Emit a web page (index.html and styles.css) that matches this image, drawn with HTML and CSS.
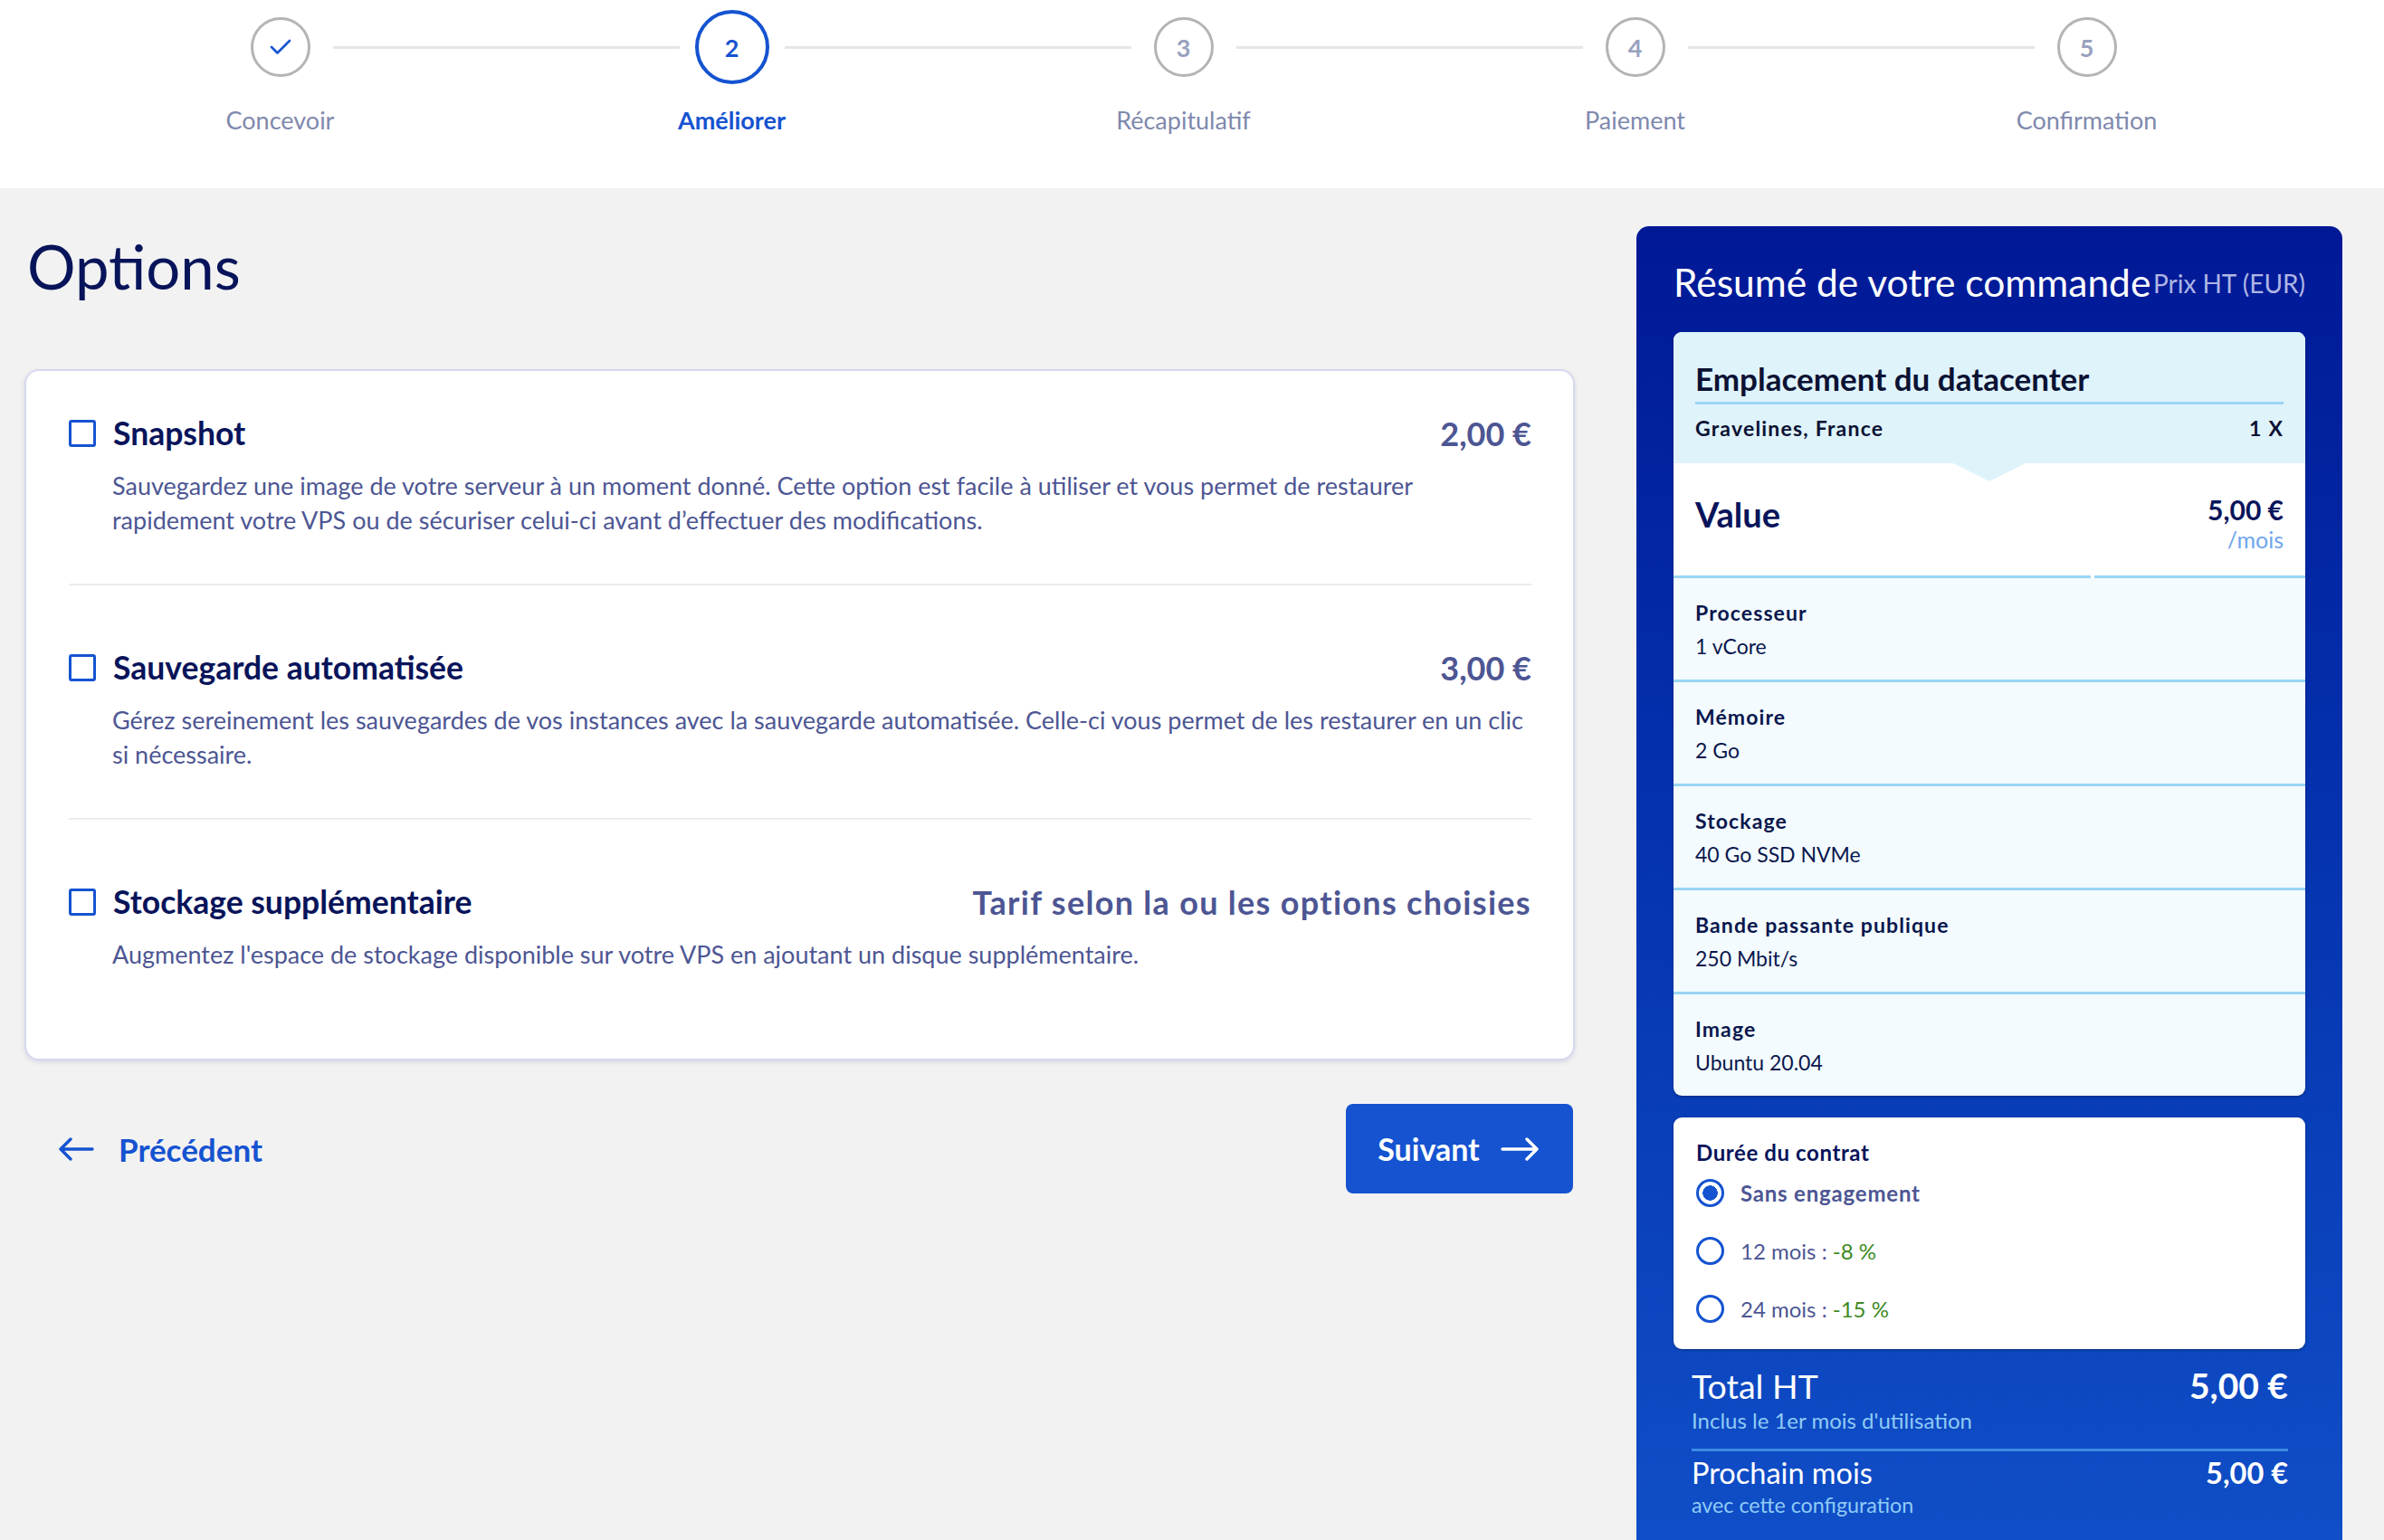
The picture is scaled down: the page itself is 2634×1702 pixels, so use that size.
FILE: index.html
```html
<!DOCTYPE html>
<html lang="fr">
<head>
<meta charset="utf-8">
<title>Options</title>
<link rel="stylesheet" href="styles.css">
</head>
<body>
<header class="stepper">
  <div class="step done">
    <div class="step-dot"><span class="circle"><svg width="24" height="18" viewBox="0 0 24 18"><polyline points="2,9 8.5,15.5 22,2" fill="none" stroke="#1553d0" stroke-width="2.6" stroke-linecap="round" stroke-linejoin="round"/></svg></span></div>
    <div class="step-label">Concevoir</div>
  </div>
  <div class="step active">
    <div class="step-dot"><span class="circle">2</span></div>
    <div class="step-label">Améliorer</div>
  </div>
  <div class="step">
    <div class="step-dot"><span class="circle">3</span></div>
    <div class="step-label">Récapitulatif</div>
  </div>
  <div class="step">
    <div class="step-dot"><span class="circle">4</span></div>
    <div class="step-label">Paiement</div>
  </div>
  <div class="step last">
    <div class="step-dot"><span class="circle">5</span></div>
    <div class="step-label">Confirmation</div>
  </div>
</header>

<main class="layout">
  <section class="content">
    <h1 class="page-title">Options</h1>
    <div class="options-card">
      <div class="option">
        <div class="option-head">
          <span class="checkbox"></span>
          <span class="option-title">Snapshot</span>
          <span class="option-price">2,00 €</span>
        </div>
        <p class="option-desc">Sauvegardez une image de votre serveur à un moment donné. Cette option est facile à utiliser et vous permet de restaurer rapidement votre VPS ou de sécuriser celui-ci avant d’effectuer des modifications.</p>
      </div>
      <div class="option">
        <div class="option-head">
          <span class="checkbox"></span>
          <span class="option-title">Sauvegarde automatisée</span>
          <span class="option-price">3,00 €</span>
        </div>
        <p class="option-desc">Gérez sereinement les sauvegardes de vos instances avec la sauvegarde automatisée. Celle-ci vous permet de les restaurer en un clic si nécessaire.</p>
      </div>
      <div class="option">
        <div class="option-head">
          <span class="checkbox"></span>
          <span class="option-title">Stockage supplémentaire</span>
          <span class="option-price option-price-note">Tarif selon la ou les options choisies</span>
        </div>
        <p class="option-desc">Augmentez l'espace de stockage disponible sur votre VPS en ajoutant un disque supplémentaire.</p>
      </div>
    </div>
    <nav class="nav-row">
      <a class="prev-link" href="#">
        <svg width="42" height="30" viewBox="0 0 42 30"><path d="M39 15H4M15 4L4 15l11 11" fill="none" stroke="#1553d0" stroke-width="3.4" stroke-linecap="round" stroke-linejoin="round"/></svg>
        <span>Précédent</span>
      </a>
      <button class="next-btn" type="button">
        <span>Suivant</span>
        <svg width="46" height="30" viewBox="0 0 46 30"><path d="M3 15h38M30 4l11 11-11 11" fill="none" stroke="#fff" stroke-width="3.4" stroke-linecap="round" stroke-linejoin="round"/></svg>
      </button>
    </nav>
  </section>

  <aside class="summary">
    <div class="summary-head">
      <h2 class="summary-title">Résumé de votre commande</h2>
      <span class="summary-note">Prix HT (EUR)</span>
    </div>

    <div class="spec-card">
      <div class="location">
        <div class="location-title">Emplacement du datacenter</div>
        <div class="location-row"><span>Gravelines, France</span><span>1 X</span></div>
      </div>
      <div class="plan">
        <div class="plan-name">Value</div>
        <div class="plan-price"><div class="amount">5,00 €</div><div class="per">/mois</div></div>
      </div>
      <div class="split-line"><span class="seg-a"></span><span class="seg-b"></span></div>
      <div class="spec"><div class="spec-name">Processeur</div><div class="spec-value">1 vCore</div></div>
      <div class="spec"><div class="spec-name">Mémoire</div><div class="spec-value">2 Go</div></div>
      <div class="spec"><div class="spec-name">Stockage</div><div class="spec-value">40 Go SSD NVMe</div></div>
      <div class="spec"><div class="spec-name">Bande passante publique</div><div class="spec-value">250 Mbit/s</div></div>
      <div class="spec"><div class="spec-name">Image</div><div class="spec-value">Ubuntu 20.04</div></div>
    </div>

    <div class="contract-card">
      <div class="contract-title">Durée du contrat</div>
      <label class="radio-row selected"><span class="radio"></span><span class="radio-label">Sans engagement</span></label>
      <label class="radio-row"><span class="radio"></span><span class="radio-label">12 mois : <span class="discount">-8 %</span></span></label>
      <label class="radio-row"><span class="radio"></span><span class="radio-label">24 mois : <span class="discount">-15 %</span></span></label>
    </div>

    <div class="totals">
      <div class="total-row">
        <div class="total-name">Total HT</div>
        <div class="total-amount">5,00 €</div>
      </div>
      <div class="total-sub">Inclus le 1er mois d'utilisation</div>
      <div class="next-row">
        <div class="next-name">Prochain mois</div>
        <div class="next-amount">5,00 €</div>
      </div>
      <div class="total-sub">avec cette configuration</div>
    </div>
  </aside>
</main>
</body>
</html>
```
FILE: styles.css
```css
* { box-sizing: border-box; }
html, body { margin: 0; padding: 0; overflow: hidden; }
body {
  background: #f2f2f2;
  font-family: Lato, "Noto Sans", sans-serif;
  color: #0a1656;
  width: 2634px;
  height: 1702px;
}

/* ---------- stepper ---------- */
.stepper {
  background: #ffffff;
  height: 208px;
  display: grid;
  grid-template-columns: repeat(5, 499px);
  padding-left: 60px;
}
.step {
  position: relative;
  display: flex;
  flex-direction: column;
  align-items: center;
}
.step:not(.last)::after {
  content: "";
  position: absolute;
  left: calc(50% + 58px);
  width: calc(100% - 116px);
  top: 51px;
  height: 3px;
  background: #e6e6e6;
}
.step-dot {
  height: 104px;
  display: flex;
  align-items: center;
  justify-content: center;
}
.circle {
  width: 66px;
  height: 66px;
  border: 3px solid #b4b4b4;
  border-radius: 50%;
  display: flex;
  align-items: center;
  justify-content: center;
  font-weight: 700;
  font-size: 27px;
  color: #98a1c0;
}
.step.active .circle {
  width: 82px;
  height: 82px;
  border: 4px solid #1553d0;
  color: #1553d0;
}
.step-label {
  margin-top: 12px;
  font-size: 27px;
  line-height: 34px;
  color: #7f89ad;
}
.step.active .step-label {
  color: #1553d0;
  font-weight: 700;
}

/* ---------- layout ---------- */
.layout {
  display: flex;
  gap: 68px;
  padding: 42px 46px 0 27px;
  align-items: flex-start;
}
.content { flex: 1; min-width: 0; }
.page-title {
  margin: 4px 0 0 3px;
  font-size: 67px;
  line-height: 80px;
  font-weight: 400;
  color: #08145a;
}

/* ---------- options card ---------- */
.options-card {
  margin-top: 74px;
  background: #ffffff;
  border: 2px solid #d6d8ee;
  border-radius: 16px;
  box-shadow: 0 2px 5px rgba(90, 96, 170, 0.18);
  padding: 47px 46px 45px 47px;
}
.option {
  padding: 69px 0 51px;
  border-bottom: 2px solid #ececec;
}
.option:first-child { padding-top: 0; }
.option:last-child { border-bottom: none; }
.option-head {
  display: flex;
  align-items: center;
  height: 44px;
}
.checkbox {
  width: 30px;
  height: 30px;
  border: 3.5px solid #1553d0;
  border-radius: 3px;
  background: #fff;
  flex: none;
}
.option-title {
  margin-left: 19px;
  font-size: 35.5px;
  line-height: 44px;
  font-weight: 700;
  color: #08145a;
}
.option-price {
  margin-left: auto;
  font-size: 36px;
  line-height: 44px;
  font-weight: 700;
  color: #4d5693;
}
.option-price-note {
  letter-spacing: 1.3px;
}
.option-desc {
  margin: 17px 0 0 48px;
  font-size: 27px;
  line-height: 38px;
  color: #4d5693;
}

/* ---------- nav ---------- */
.nav-row {
  margin-top: 48px;
  display: flex;
  justify-content: space-between;
  align-items: center;
}
.prev-link {
  margin-left: 36px;
  display: flex;
  align-items: center;
  gap: 26px;
  color: #1553d0;
  text-decoration: none;
  font-size: 35px;
  font-weight: 700;
}
.next-btn {
  width: 251px;
  height: 99px;
  border: none;
  border-radius: 8px;
  background: #1553d0;
  color: #fff;
  font-family: inherit;
  font-size: 34px;
  font-weight: 700;
  display: flex;
  align-items: center;
  justify-content: center;
  gap: 22px;
  margin-right: 2px;
}

/* ---------- summary panel ---------- */
.summary {
  width: 780px;
  flex: none;
  border-radius: 14px 14px 0 0;
  background: linear-gradient(180deg, #001896 0%, #0533b0 45%, #1050c8 100%);
  padding: 38px 41px 60px;
  min-height: 1500px;
}
.summary-head {
  display: flex;
  align-items: baseline;
  justify-content: space-between;
}
.summary-title {
  margin: 0;
  font-size: 42.5px;
  line-height: 48px;
  font-weight: 400;
  color: #ffffff;
  white-space: nowrap;
}
.summary-note {
  font-size: 28px;
  color: #aeb6e4;
  white-space: nowrap;
  position: relative;
  top: -4px;
}

.spec-card {
  margin-top: 31px;
  border-radius: 9px;
  overflow: hidden;
  background: #f3fbfe;
  box-shadow: 0 1px 3px rgba(0, 0, 0, 0.35);
}
.location {
  background: #dff3fb;
  padding: 31px 24px 24px;
}
.location-title {
  font-size: 35px;
  line-height: 40px;
  font-weight: 700;
  color: #0b1233;
  padding-bottom: 6px;
  border-bottom: 3px solid #9ad5f4;
}
.location-row {
  margin-top: 11px;
  display: flex;
  justify-content: space-between;
  font-size: 23px;
  letter-spacing: 1.2px;
  line-height: 30px;
  font-weight: 700;
  color: #0b1233;
}
.plan {
  position: relative;
  background: #ffffff;
  padding: 34px 24px 23px;
  display: flex;
  justify-content: space-between;
  align-items: flex-start;
}
.plan::before {
  content: "";
  position: absolute;
  top: 0;
  left: calc(50% - 40px);
  border-left: 40px solid transparent;
  border-right: 40px solid transparent;
  border-top: 20px solid #dff3fb;
}
.plan-name {
  font-size: 38px;
  line-height: 44px;
  font-weight: 700;
  color: #08145a;
}
.plan-price { text-align: right; }
.amount {
  font-size: 30px;
  line-height: 34px;
  font-weight: 700;
  color: #08145a;
}
.per {
  font-size: 25px;
  line-height: 33px;
  color: #6ea6ec;
}
.split-line {
  display: flex;
  gap: 4px;
  height: 3px;
  background: #ffffff;
}
.seg-a { flex: 0 0 461px; background: #9ad5f4; }
.seg-b { flex: 1; background: #9ad5f4; }
.spec {
  padding: 20px 24px 18px;
  border-top: 3px solid #9ad5f4;
}
.split-line + .spec { border-top: none; }
.spec-name {
  font-size: 23px;
  letter-spacing: 1.1px;
  line-height: 37px;
  font-weight: 700;
  color: #0a174d;
}
.spec-value {
  font-size: 23px;
  line-height: 37px;
  color: #0a174d;
}

.contract-card {
  margin-top: 24px;
  background: #ffffff;
  border-radius: 9px;
  box-shadow: 0 1px 3px rgba(0, 0, 0, 0.35);
  padding: 27px 26px 13px 25px;
}
.contract-title {
  font-size: 24px;
  letter-spacing: 0.6px;
  line-height: 24px;
  font-weight: 700;
  color: #08145a;
}
.radio-row {
  display: flex;
  align-items: center;
  height: 64px;
  gap: 18px;
}
.radio {
  width: 31px;
  height: 31px;
  border-radius: 50%;
  border: 3.5px solid #1553d0;
  background: #fff;
  flex: none;
}
.radio-row.selected .radio {
  background: radial-gradient(circle, #1553d0 0 8px, #fff 8.5px);
}
.radio-label {
  font-size: 24px;
  color: #4d5693;
}
.radio-row.selected .radio-label { font-weight: 700; letter-spacing: 0.8px; }
.discount { color: #3f8a1f; }

.totals {
  padding: 18px 19px 0 20px;
}
.total-row, .next-row {
  display: flex;
  justify-content: space-between;
  align-items: baseline;
  color: #ffffff;
}
.total-row { font-size: 37.5px; line-height: 44px; }
.total-amount { font-weight: 700; font-size: 39px; }
.next-amount { font-weight: 700; font-size: 32.5px; }
.total-sub {
  font-size: 24px;
  line-height: 32px;
  color: #8fcbf6;
}
.next-row {
  margin-top: 15px;
  border-top: 3px solid #3d8ae6;
  padding-top: 5px;
  font-size: 32.5px;
  line-height: 38px;
}
.next-row + .total-sub { font-size: 23.3px; }
```
